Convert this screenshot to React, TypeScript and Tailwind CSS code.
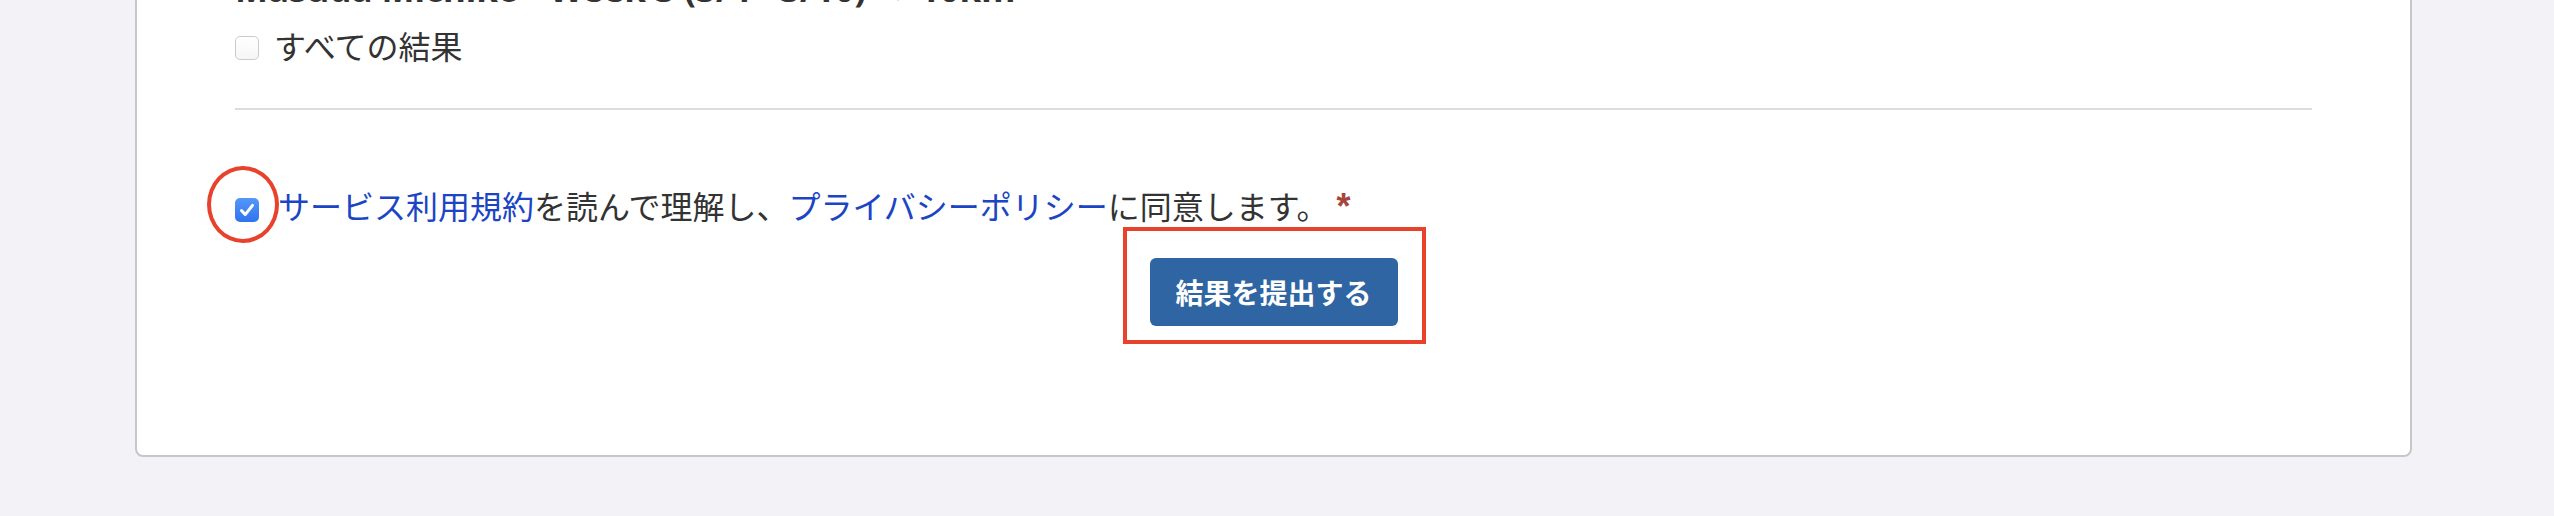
import React from "react";

const jp = "font-['Noto_Sans_CJK_JP','Noto_Sans',sans-serif]";

function Unchecked() {
  return (
    <span className="block w-[24px] h-[24px] shrink-0 rounded-[5px] border border-[#cbcbcb] bg-gradient-to-b from-white to-[#f6f6f6]" />
  );
}

function Checked() {
  return (
    <span className="relative block w-[24px] h-[24px] shrink-0">
      <span className="absolute -left-[28px] -top-[32px] w-[72px] h-[77px] rounded-[50%] border-4 border-[#e8412c] pointer-events-none" />
      <span className="flex w-[24px] h-[24px] items-center justify-center rounded-[5px] bg-gradient-to-b from-[#5597f8] to-[#2f73ee]">
        <svg width="24" height="24" viewBox="0 0 24 24" fill="none">
          <path d="M6.5 12.5 L10.2 16.6 L17.5 7.4" stroke="white" strokeWidth="3" strokeLinecap="round" strokeLinejoin="round" />
        </svg>
      </span>
    </span>
  );
}

export default function App() {
  return (
    <div className="min-h-[516px] bg-[#f2f2f7] pl-[135px] pr-[142px] overflow-hidden">
      <div className="-mt-[60px] bg-white border-2 border-[#c7c6cd] rounded-[8px] px-[98px] pt-[27px] pb-[129px]">
        <h2 className="font-['Noto_Sans',sans-serif] font-bold text-[35px] leading-[40px] text-[#333333] whitespace-nowrap">
          Masuda Michiko - Week 3 (3/4 - 3/10) → 10km
        </h2>

        <div className="mt-[19px] h-[40px] flex items-center">
          <Unchecked />
          <span className={`${jp} ml-[15px] mb-[6px] text-[32px] leading-[40px] text-[#333333]`}>すべての結果</span>
        </div>

        <div className="mt-[40px] h-[2px] bg-[#dcdbe0]" />

        <div className="mt-[80px] h-[40px] flex items-center">
          <Checked />
          <span className={`${jp} ml-[19px] mb-[8px] text-[32px] leading-[40px] text-[#333333] whitespace-nowrap`}>
            <a className="text-[#1b45c4]">サービス利用規約</a>を読んで理解し、<a className="text-[#1b45c4]">プライバシーポリシー</a>に同意します。
            <span className="ml-[8px] font-['Liberation_Sans',sans-serif] font-bold text-[36px] text-[#a4463c]">*</span>
          </span>
        </div>

        <div className="mt-[28px] flex justify-center">
          <div className="relative">
            <span className="absolute -left-[27px] -top-[31px] -right-[28px] -bottom-[18px] border-4 border-[#e8412c] pointer-events-none" />
            <button className={`${jp} w-[248px] h-[68px] rounded-[6px] bg-[#3065a3] text-white font-bold text-[28px] leading-none flex items-center justify-center`}>
              結果を提出する
            </button>
          </div>
        </div>
      </div>
    </div>
  );
}
